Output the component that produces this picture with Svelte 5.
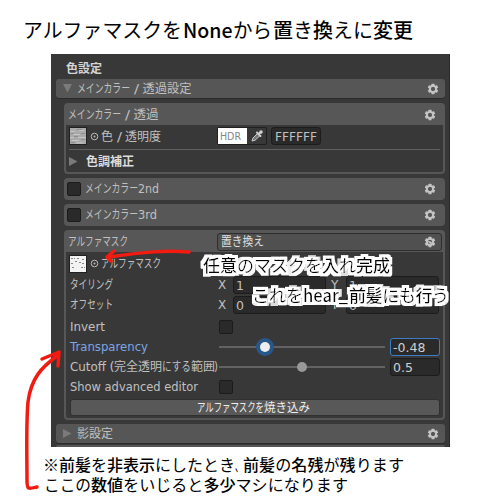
<script>
  // a label is a list of runs: [text, x, width]
  const title = [['アルファマスクを', 23, 159], ['None', 183, 49.5], ['から', 233, 39], ['置き換えに変更', 273, 140]]
  const mainColor = [['メインカラー', 0, 53], ['/', 57, 5], ['透過', 65.5, 25]]
  const mainSetting = [['メインカラー', 0, 53], ['/', 57, 5], ['透過設定', 65.5, 49]]
  const colorAlpha = [['色', 0, 12], ['/', 16, 5], ['透明度', 24, 36]]
  const cutoff = [['Cutoff', 0, 36], ['(', 39.5, 5], ['完全透明', 44, 48], ['にする', 92, 29], ['範囲', 121, 24], [')', 144, 4]]

  let transparency = -0.48
  let cut = 0.5

  const teeth = [0, 60, 120, 180, 240, 300]
  const tiling = [['タイリング', 43, '1'], ['オフセット', 43, '0']]

  // kana are set lighter than kanji and latin
  const isKana = (s) => /^[ぁ-ヶー、]/.test(s)
  const split = (s) => s.match(/[ぁ-ヶー、]+|[^ぁ-ヶー、]+/g)
</script>

{#snippet parts(text)}{#each split(text) as p}<tspan class:kana={isKana(p)}>{p}</tspan>{/each}{/snippet}

{#snippet label(runs, size = 12, width = 0)}
  <svg class="label" width={width || runs[runs.length - 1][1] + runs[runs.length - 1][2]} height="18">
    {#each runs as [text, x, w]}
      <text {x} y={9 + size * 0.37} font-size={size} textLength={w} lengthAdjust="spacingAndGlyphs">{@render parts(text)}</text>
    {/each}
  </svg>
{/snippet}

{#snippet gear(dot = false)}
  <svg class="gear" width="12" height="12" viewBox="-6 -6 12 12">
    {#each teeth as a}
      <rect x="-1.5" y="-5.3" width="3" height="3" rx=".6" transform="rotate({a})" />
    {/each}
    <circle r="3.1" class="ring" />
    {#if dot}
      <path d="M-2.6-1 0-.8 1.8 0 1.8 2 -.2 1.8Z" />
    {/if}
  </svg>
{/snippet}

{#snippet arrow(open)}
  <svg class="tri" width="9" height="9">
    <path d={open ? 'M0 0H9L4.5 8.5Z' : 'M0 0 8.5 4.5 0 9Z'} />
  </svg>
{/snippet}

{#snippet target()}
  <svg class="target" width="9" height="9"><circle cx="4.5" cy="4.5" r="3.3" /><circle class="dot" cx="4.5" cy="4.5" r="1" /></svg>
{/snippet}

<main>
  <h1>{@render label(title, 20, 430)}</h1>

  <section class="inspector">
    <div class="heading">{@render label([['色設定', 0, 36]])}</div>

    <div class="bar">
      {@render arrow(true)}
      {@render label(mainSetting)}
      {@render gear()}
    </div>

    <div class="box main">
      <div class="head">{@render label(mainColor)}{@render gear()}</div>
      <div class="color-row">
        <svg class="thumb" width="18" height="18">
          <rect x=".5" y=".5" width="17" height="17" fill="#aaa" stroke="#202020" />
          <path d="M1 4.5H6M10 3.5H15M4 7.5H11M1 10.5H5M9 10.5H17M3 13.5H10M7 16H14" stroke="#c4c4c4" />
          <path d="M8 2.5H13M2 6.5H5M12 6.5H16M5 9.5H9M12 12.5H16M2 15.5H6" stroke="#8e8e8e" />
        </svg>
        {@render target()}
        {@render label(colorAlpha)}
        <div class="swatch">
          <span>{@render label([['HDR', 0, 21]], 10.5)}</span>
          <svg width="18" height="16" viewBox="0 0 18 16">
            <path d="M4 13 5 10 9.5 5.5 11.8 7.8 7 12.3Z" fill="#777" stroke="#c8c8c8" />
            <path d="M9 4.5 12.5 8M11 6 13 4" stroke="#d0d0d0" stroke-width="2" stroke-linecap="round" />
            <circle cx="13" cy="4" r="1.8" fill="#d0d0d0" />
          </svg>
        </div>
        <div class="field hex">{@render label([['FFFFFF', 0, 42]], 12.5)}</div>
      </div>
      <hr />
      <div class="sub">{@render arrow(false)}{@render label([['色調補正', 0, 48]])}</div>
    </div>

    {#each ['2nd', '3rd'] as n}
      <div class="box layer">
        <i class="check"></i>
        {@render label([['メインカラー', 0, 53], [n, 53, n === '2nd' ? 21 : 19]])}
        {@render gear()}
      </div>
    {/each}

    <div class="box mask">
      <div class="head">
        {@render label([['アルファマスク', 0, 60]])}
        <div class="select">{@render label([['置き換え', 0, 43]])}{@render gear(true)}</div>
      </div>
      <div class="mask-row">
        <svg class="thumb" width="18" height="18">
          <rect x=".5" y=".5" width="17" height="17" fill="#f2f2f2" stroke="#202020" />
          <path d="M2 3.5H6M8 3.5H11M13 4.5H16M2 8.5H5M6 6.5H9M10 7.5H12M13 8.5H16M3 12.5H6M12 12.5H16" stroke="#888" stroke-dasharray="2 1" />
        </svg>
        {@render target()}
        {@render label([['アルファマスク', 0, 60]])}
      </div>
      {#each tiling as [name, w, value]}
        <div class="row">
          <div class="name">{@render label([[name, 0, w]])}</div>
          <b class="axis">X</b>
          <div class="field num">{value}</div>
          <b class="axis">Y</b>
          <div class="field num">{value}</div>
        </div>
      {/each}
      <div class="row prop first">
        <div class="name">{@render label([['Invert', 0, 35]])}</div>
        <i class="check"></i>
      </div>
      <div class="row prop">
        <div class="name active">{@render label([['Transparency', 0, 78]])}</div>
        <div class="slider"><i class="knob active" style="left: 27.5%"></i></div>
        <div class="field value active">{transparency}</div>
      </div>
      <div class="row prop">
        <div class="name">{@render label(cutoff)}</div>
        <div class="slider"><i class="knob" style="left: {cut * 100}%"></i></div>
        <div class="field value">{cut}</div>
      </div>
      <div class="row prop">
        <div class="name">{@render label([['Show advanced editor', 0, 128]])}</div>
        <i class="check"></i>
      </div>
      <button>{@render label([['アルファマスクを', 0, 67], ['焼き込み', 67, 46]])}</button>
    </div>

    <div class="bar shadow">
      {@render arrow(false)}
      {@render label([['影設定', 0, 36]])}
      {@render gear()}
    </div>
    <div class="next"></div>
  </section>

  <footer>
    {@render label([['※', 43, 16], ['前髪を非表示にしたとき', 59, 176], ['、', 235, 8], ['前髪の名残が残ります', 243, 161]], 16, 450)}
    {@render label([['ここの', 44, 47], ['数値をいじると多少マシになります', 91, 257]], 16, 450)}
  </footer>

  <svg class="notes" width="500" height="500">
    <filter id="halo" x="-5%" y="-30%" width="110%" height="160%">
      <feMorphology in="SourceAlpha" operator="dilate" radius="3" result="fat" />
      <feFlood flood-color="#fff" />
      <feComposite in2="fat" operator="in" />
      <feMerge>
        <feMergeNode />
        <feMergeNode in="SourceGraphic" />
      </feMerge>
    </filter>
    <g class="strokes">
      <path d="M189 252C165 250 145 252 109 257M114 251 107 257 111 261" />
      <path d="M37 487C28 489 27 490 27 480C27 455 26 425 28 402C31 378 42 367 57 356M42 359 59 352 58 366" />
    </g>
    <text filter="url(#halo)" x="203" y="271.5" textLength="187">{@render parts('任意のマスクを入れ完成')}</text>
    <g filter="url(#halo)">
      <text x="252" y="301.5" textLength="51">{@render parts('これを')}</text>
      <text x="303" y="301.5" textLength="45" lengthAdjust="spacingAndGlyphs">hear_</text>
      <text x="349" y="301.5" textLength="100">{@render parts('前髪にも行う')}</text>
    </g>
  </svg>
</main>

<style>
  :global(body) {
    background: #fff;
    font-family: "DejaVu Sans", "Noto Sans CJK JP", sans-serif;
  }
  main {
    position: relative;
    width: 500px;
    height: 500px;
    overflow: hidden;
  }
  * { box-sizing: border-box; }
  svg { display: block; flex: none; }
  .label { overflow: visible; fill: currentColor; }
  h1 {
    margin: 0;
    height: 54px;
    padding-top: 22px;
    font-family: "Noto Sans CJK JP", sans-serif;
    font-weight: 500;
    color: #000;
  }
  h1 .kana, footer .kana, .notes .kana { font-weight: 400; }
  .inspector {
    width: 399px;
    height: 393px;
    margin-left: 51px;
    padding: 6px 4px 0 5px;
    background: #383838;
    border-right: 1px solid #2a2a2a;
    color: #c0c0c0;
    overflow: hidden;
  }
  .heading {
    height: 19px;
    padding-left: 10px;
    font-weight: bold;
    color: #d4d4d4;
  }
  .bar {
    display: flex;
    align-items: center;
    gap: 5px;
    height: 19px;
    padding: 0 6px 0 7px;
    background: #565656;
    border-radius: 3px;
    box-shadow: 0 1px #2b2b2b;
  }
  .gear { margin-left: auto; fill: #c4c4c4; }
  .ring { fill: none; stroke: #c4c4c4; stroke-width: 1.9; }
  .tri { fill: #7b7b7b; }
  .box {
    margin: 4px 0 0 8px;
    background: #383838;
    border: 2px solid #575757;
    border-radius: 4px;
  }
  .main { height: 71px; margin-top: 5px; }
  .head {
    display: flex;
    align-items: center;
    height: 20px;
    padding: 0 7px 0 2px;
    background: #575757;
  }
  .color-row, .mask-row {
    display: flex;
    align-items: center;
    height: 22px;
    padding-left: 3px;
  }
  .mask-row { height: 23px; }
  .target { margin: 0 2px 0 3px; fill: none; stroke: #b8b8b8; }
  .target .dot { fill: #b8b8b8; stroke: none; }
  .color-row > .label, .mask-row > .label { margin-top: 1px; }
  .swatch {
    display: flex;
    width: 50px;
    height: 18px;
    margin-left: 56px;
    border: 1px solid #202020;
    border-radius: 2px;
  }
  .swatch span {
    width: 30px;
    height: 16px;
    margin-right: 1px;
    padding-left: 2px;
    background: #fff;
    color: #858585;
  }
  .field {
    height: 18px;
    background: #2a2a2a;
    border: 1px solid #1c1c1c;
    border-radius: 3px;
    font-size: 12.5px;
    line-height: 17px;
  }
  .hex {
    width: 50px;
    margin-left: 4px;
    padding-left: 3px;
  }
  .hex .label, .swatch .label { margin-top: -1px; }
  hr {
    height: 1px;
    margin: 2px 3px 0;
    border: 0;
    background: #606060;
  }
  .sub {
    display: flex;
    align-items: center;
    gap: 8px;
    height: 23px;
    padding-left: 3px;
    font-weight: bold;
    color: #dcdcdc;
  }
  .layer {
    display: flex;
    align-items: center;
    height: 22px;
    padding: 0 7px 0 1px;
    background: #575757;
  }
  .layer .label { margin-left: 4px; }
  .check {
    width: 14px;
    height: 14px;
    background: #2a2a2a;
    border: 1px solid #1b1b1b;
    border-radius: 2px;
  }
  .mask { height: 190px; }
  .mask .head { padding-right: 1px; }
  .select {
    display: flex;
    align-items: center;
    width: 225px;
    height: 18px;
    margin-left: auto;
    padding: 0 5px 0 3px;
    background: #505050;
    border: 1px solid #2e2e2e;
    border-radius: 3px;
    color: #e0e0e0;
  }
  .row {
    display: flex;
    align-items: center;
    height: 20px;
    padding: 0 3px 0 4px;
  }
  .name { width: 149px; }
  .name.active { color: #7ba6e4; }
  .axis {
    width: 14px;
    margin-left: -1px;
    font-size: 12px;
    font-weight: normal;
  }
  .num {
    width: 93px;
    margin: 0 6px 0 1px;
    padding-left: 2px;
  }
  .num:last-child { margin-right: 0; }
  .first { margin-top: 2px; }
  .slider {
    position: relative;
    width: 166px;
    height: 2px;
    background: #626262;
  }
  .knob {
    position: absolute;
    top: -4px;
    width: 10px;
    height: 10px;
    margin-left: -5px;
    background: #999;
    border-radius: 50%;
  }
  .knob.active { background: #eee; box-shadow: 0 0 0 4px #28578a; }
  .value {
    width: 50px;
    margin-left: auto;
    padding-left: 2px;
    color: #d0d0d0;
  }
  .value.active { border-color: #3d7dc4; }
  button {
    display: flex;
    justify-content: center;
    align-items: center;
    width: 370px;
    height: 17px;
    margin: 2px 0 0 4px;
    padding: 0 4px 0 0;
    background: #585858;
    border: 1px solid #303030;
    border-radius: 3px;
    color: #eee;
    font: inherit;
  }
  .shadow { margin-top: 4px; }
  .next {
    height: 4px;
    margin-top: 2px;
    background: #565656;
    border-radius: 3px;
  }
  footer {
    padding-top: 9px;
    font-family: "Noto Sans CJK JP", sans-serif;
    font-weight: 500;
    color: #000;
  }
  footer .label { margin-bottom: 2px; }
  .notes {
    position: absolute;
    left: 0;
    top: 0;
    font-family: "Noto Sans CJK JP", sans-serif;
    font-size: 17px;
    font-weight: 500;
  }
  .strokes {
    fill: none;
    stroke: #f21b12;
    stroke-width: 3.5;
    stroke-linecap: round;
    stroke-linejoin: round;
  }
</style>
